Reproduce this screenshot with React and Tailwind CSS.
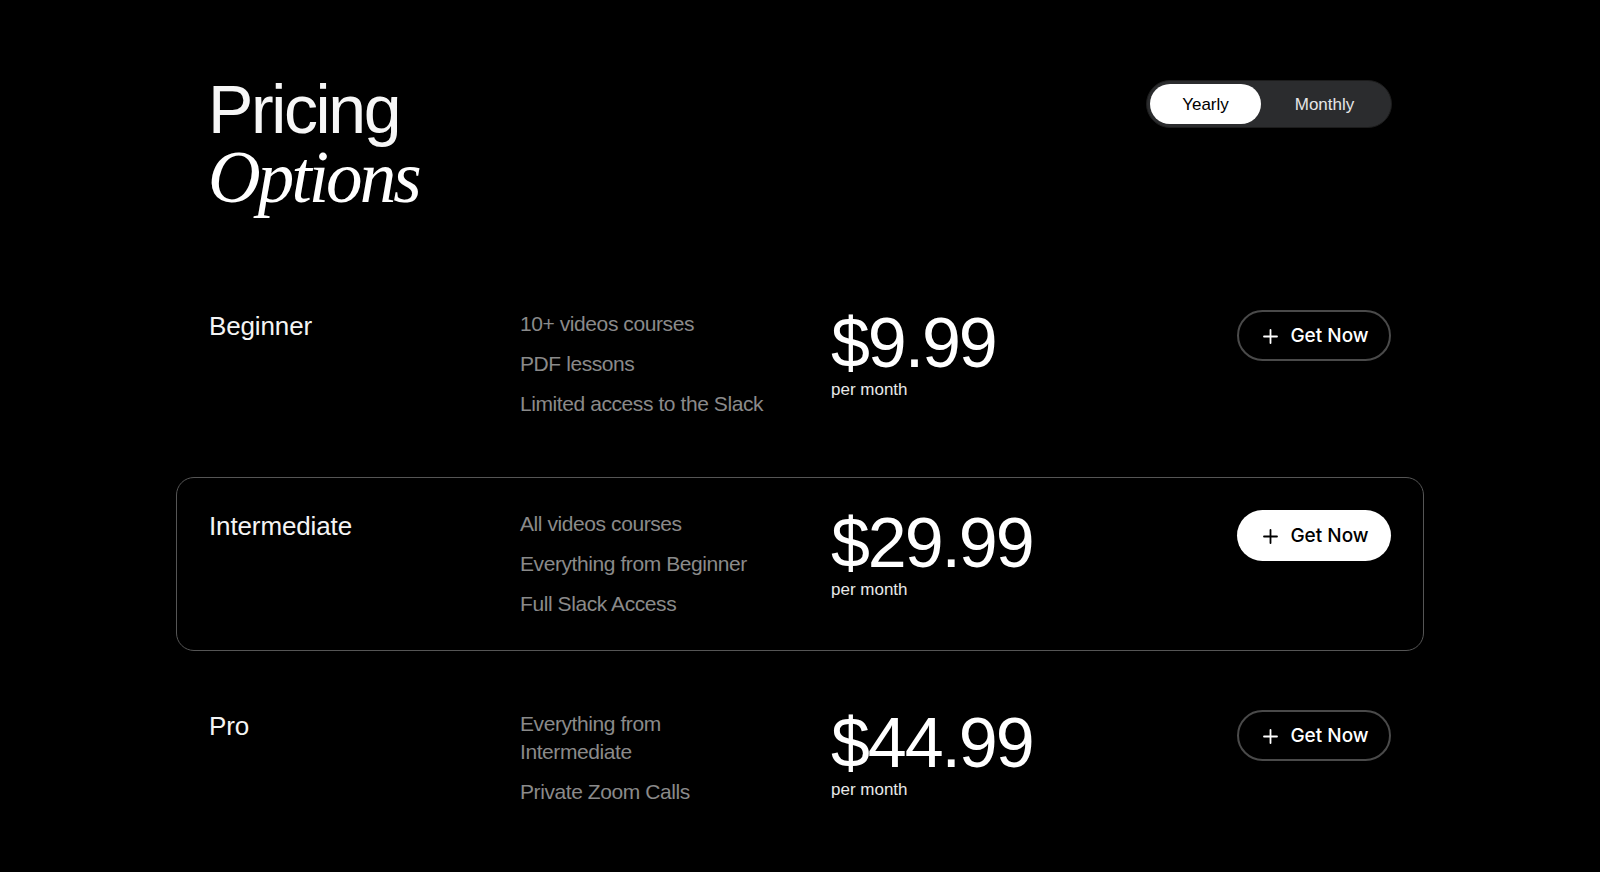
import { useState } from "react";

const plans = [
  {
    name: "Beginner",
    features: ["10+ videos courses", "PDF lessons", "Limited access to the Slack"],
    price: "$9.99",
  },
  {
    name: "Intermediate",
    features: ["All videos courses", "Everything from Beginner", "Full Slack Access"],
    price: "$29.99",
    featured: true,
  },
  {
    name: "Pro",
    features: ["Everything from Intermediate", "Private Zoom Calls"],
    price: "$44.99",
  },
];

function PlusIcon() {
  return (
    <svg width="15" height="15" viewBox="0 0 15 15" fill="none" stroke="currentColor" strokeWidth="1.8" strokeLinecap="round">
      <path d="M7.5 1v13M1 7.5h13" />
    </svg>
  );
}

function PlanRow({ plan }) {
  return (
    <div
      className={
        "grid grid-cols-[311px_311px_1fr_auto] rounded-[18px] border p-8 " +
        (plan.featured ? "border-[#555555]" : "border-transparent")
      }
    >
      <h3 className="text-[26px] leading-8 tracking-[-0.005em] text-[#f4f4f4]">{plan.name}</h3>

      <ul className="flex w-[254px] flex-col gap-3">
        {plan.features.map((f) => (
          <li key={f} className="text-[21px] leading-7 tracking-[-0.02em] text-[#8a8a8a]">
            {f}
          </li>
        ))}
      </ul>

      <div className="flex flex-col">
        <span className="text-[70px] leading-[66px] tracking-[-0.03em] text-white">{plan.price}</span>
        <span className="mt-0.5 text-[17px] leading-6 text-[#e8e8e8]">per month</span>
      </div>

      <button
        className={
          "flex h-[51px] w-[154px] items-center justify-center gap-3 rounded-full pl-1 pt-0.5 text-[19px] font-medium " +
          (plan.featured
            ? "bg-white text-black"
            : "border-2 border-[#4a4a4a] text-white")
        }
      >
        <PlusIcon />
        <span className="font-['Inter',sans-serif]">Get Now</span>
      </button>
    </div>
  );
}

export default function App() {
  const [period, setPeriod] = useState("yearly");

  return (
    <div className="min-h-screen bg-black font-['Liberation_Sans',Arial,sans-serif] text-white">
      <div className="mx-auto w-[1248px] pt-[76px]">
        <div className="flex items-start justify-between px-8">
          <h1 className="flex flex-col">
            <span className="text-[68px] leading-[66px] tracking-[-0.035em] text-[#f6f6f6]">Pricing</span>
            <span className="font-['Liberation_Serif',serif] text-[73px] italic leading-[72px] tracking-[-0.04em]">
              Options
            </span>
          </h1>

          <div className="mt-1 flex rounded-full border border-[#1c1c1c] bg-[#2b2c2e] p-[3px]">
            <button
              onClick={() => setPeriod("yearly")}
              className={
                "h-10 w-[111px] rounded-full pt-0.5 text-[17px] " +
                (period === "yearly" ? "bg-white text-black" : "text-[#e6e6e6]")
              }
            >
              Yearly
            </button>
            <button
              onClick={() => setPeriod("monthly")}
              className={
                "h-10 w-[127px] rounded-full pt-0.5 text-[17px] " +
                (period === "monthly" ? "bg-white text-black" : "text-[#e6e6e6]")
              }
            >
              Monthly
            </button>
          </div>
        </div>

        <div className="mt-[63px] flex flex-col gap-[26px]">
          {plans.map((p) => (
            <PlanRow key={p.name} plan={p} />
          ))}
        </div>
      </div>
    </div>
  );
}
